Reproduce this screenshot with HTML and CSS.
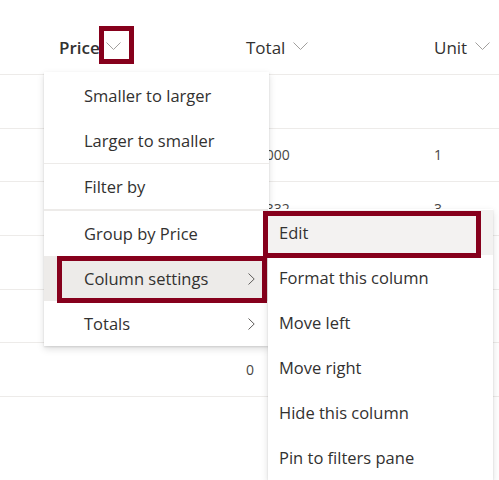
FILE: index.html
```html
<!DOCTYPE html>
<html lang="en">
<head>
<meta charset="utf-8">
<title>Column menu</title>
<link rel="stylesheet" href="styles.css">
</head>
<body>
<div class="page">
  <div class="table">
    <div class="row head">
      <div class="cell cell-price">
        <span class="htext strong">Price</span>
        <span class="chev">
          <svg width="15" height="8" viewBox="0 0 15 8"><path d="M0.5 0.5 L7.5 7.5 L14.5 0.5" /></svg>
          <span class="mark mark-chev"></span>
        </span>
      </div>
      <div class="cell">
        <span class="htext">Total</span>
        <span class="chev"><svg width="15" height="8" viewBox="0 0 15 8"><path d="M0.5 0.5 L7.5 7.5 L14.5 0.5" /></svg></span>
      </div>
      <div class="cell">
        <span class="htext">Unit</span>
        <span class="chev"><svg width="15" height="8" viewBox="0 0 15 8"><path d="M0.5 0.5 L7.5 7.5 L14.5 0.5" /></svg></span>
      </div>
    </div>
    <div class="row"><div class="cell"></div><div class="cell"></div><div class="cell"></div></div>
    <div class="row"><div class="cell"></div><div class="cell">$1,000</div><div class="cell">1</div></div>
    <div class="row"><div class="cell"></div><div class="cell">$1,332</div><div class="cell">3</div></div>
    <div class="row"><div class="cell"></div><div class="cell"></div><div class="cell"></div></div>
    <div class="row"><div class="cell"></div><div class="cell"></div><div class="cell"></div></div>
    <div class="row"><div class="cell"></div><div class="cell">0</div><div class="cell"></div></div>
  </div>

  <div class="menu menu-main">
    <div class="item">Smaller to larger</div>
    <div class="item">Larger to smaller</div>
    <div class="sep"></div>
    <div class="item">Filter by</div>
    <div class="sep sep-thick"></div>
    <div class="item">Group by Price</div>
    <div class="item item-hover">Column settings
      <svg class="sub-chev" width="7" height="12" viewBox="0 0 7 12"><path d="M0.5 0.5 L6.2 6 L0.5 11.5" /></svg>
      <span class="mark mark-col"></span>
    </div>
    <div class="item">Totals
      <svg class="sub-chev" width="7" height="12" viewBox="0 0 7 12"><path d="M0.5 0.5 L6.2 6 L0.5 11.5" /></svg>
    </div>
  </div>

  <div class="menu menu-sub">
    <div class="item item-focus">Edit<span class="mark mark-edit"></span></div>
    <div class="item">Format this column</div>
    <div class="item">Move left</div>
    <div class="item">Move right</div>
    <div class="item">Hide this column</div>
    <div class="item">Pin to filters pane</div>
  </div>
</div>
</body>
</html>
```

FILE: styles.css
```css
* { box-sizing: border-box; }

html, body {
  margin: 0;
  padding: 0;
  background: #ffffff;
}

body {
  font-family: "Open Sans", "Noto Sans", "Liberation Sans", sans-serif;
  color: #323130;
}

.page {
  position: relative;
  width: 499px;
  height: 480px;
  overflow: hidden;
}

.table {
  display: flex;
  flex-direction: column;
}

.row {
  display: grid;
  grid-template-columns: 187px 188px 1fr;
  padding-left: 59px;
  height: 53.67px;
  align-items: center;
  border-bottom: 1px solid #edebe9;
  font-size: 14px;
  color: #484644;
}

.row.head {
  height: 75px;
  padding-top: 20px;
  font-size: 17px;
  color: #323130;
}

.cell {
  display: flex;
  align-items: center;
  gap: 8px;
}

.cell-price { gap: 6px; }

.htext { font-weight: 400; }
.htext.strong { font-weight: 600; }

.chev {
  position: relative;
  display: inline-flex;
  margin-bottom: 3px;
}

.chev svg path {
  fill: none;
  stroke: #a19f9d;
  stroke-width: 1;
}

.mark {
  position: absolute;
  border: 5px solid #86001c;
  pointer-events: none;
}

.mark-chev {
  left: -7px;
  right: -13px;
  top: -16px;
  bottom: -14px;
}

.menu {
  position: absolute;
  width: 225px;
  background: #ffffff;
  box-shadow: 0 3.2px 7.2px rgba(0, 0, 0, 0.132), 0 0.6px 1.8px rgba(0, 0, 0, 0.108);
  display: flex;
  flex-direction: column;
  font-size: 16.5px;
  color: #323130;
}

.menu-main {
  left: 44px;
  top: 72px;
  padding-top: 1px;
}

.menu-sub {
  left: 268px;
  top: 209px;
  padding-top: 1px;
}

.item {
  position: relative;
  height: 45px;
  display: flex;
  align-items: center;
  justify-content: space-between;
  padding-left: 40px;
  padding-right: 14px;
  white-space: nowrap;
}

.menu-sub .item {
  padding-left: 11px;
}

.item-hover { background: #edebe9; }
.item-focus { background: #f3f2f1; }

.sub-chev path {
  fill: none;
  stroke: #605e5c;
  stroke-width: 1;
}

.sep {
  height: 1px;
  background: #edebe9;
}

.sep-thick { height: 2px; }

.mark-col {
  left: 13px;
  right: 2px;
  top: 0;
  bottom: -2px;
}

.mark-edit {
  left: -5px;
  right: 12px;
  top: 1px;
  bottom: -3px;
}
```
